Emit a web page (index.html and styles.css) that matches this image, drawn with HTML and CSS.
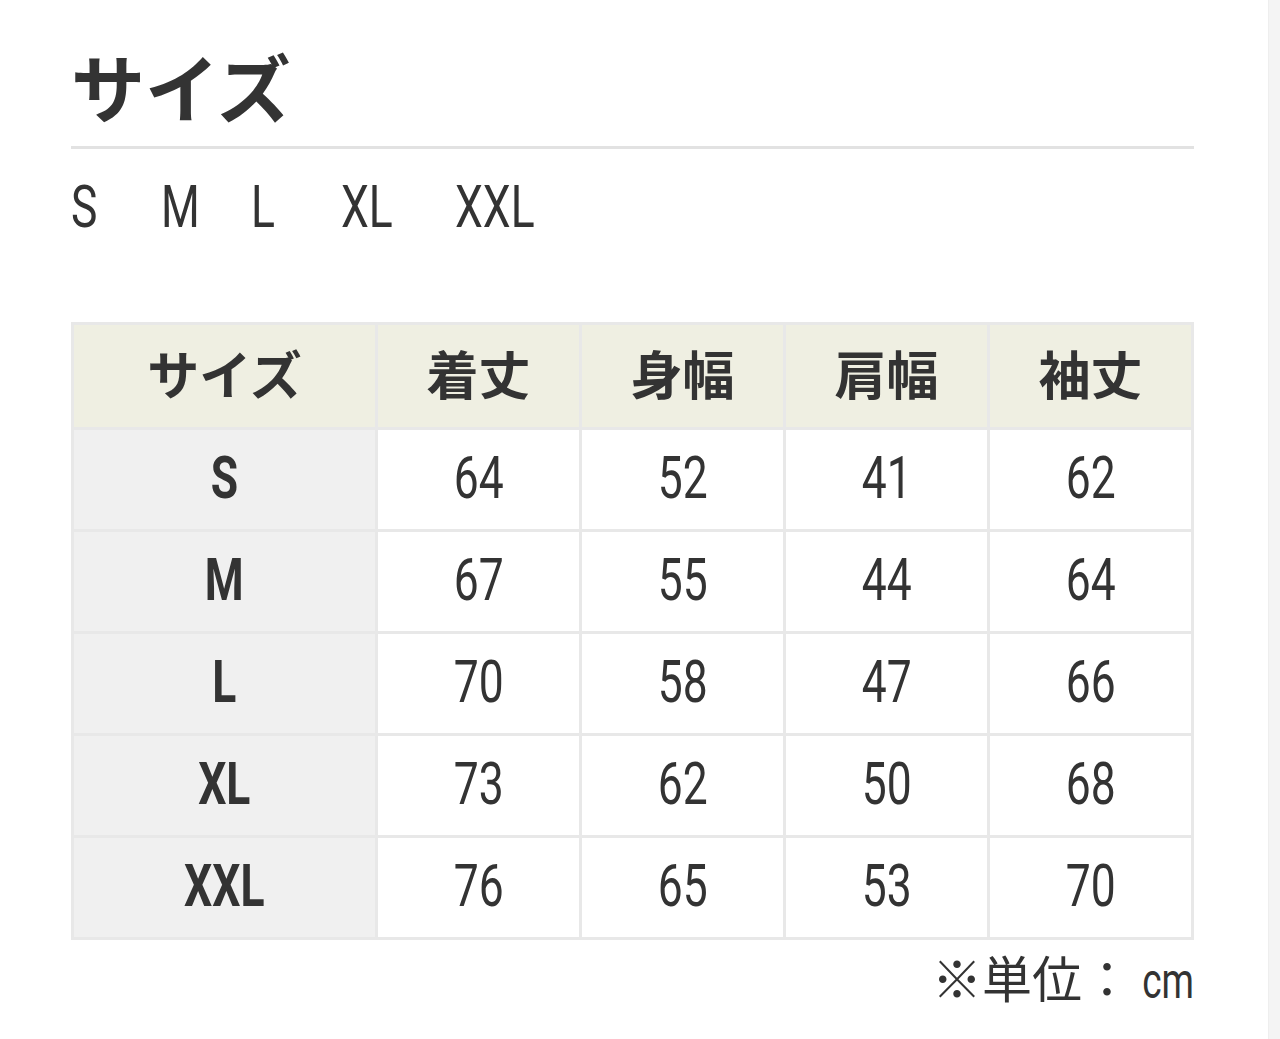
FILE: index.html
```html
<!DOCTYPE html>
<html lang="ja">
<head>
<meta charset="utf-8">
<title>サイズ</title>
<link rel="stylesheet" href="styles.css">
</head>
<body>
<div class="page">
  <main class="content">
    <h2 class="title">サイズ</h2>
    <ul class="size-list">
      <li class="len1"><span class="cond">S</span></li>
      <li class="len1"><span class="cond">M</span></li>
      <li class="len1"><span class="cond">L</span></li>
      <li class="len2"><span class="cond">XL</span></li>
      <li class="len3"><span class="cond">XXL</span></li>
    </ul>
    <table class="size-table">
      <colgroup>
        <col class="c-first">
        <col class="c-data">
        <col class="c-data">
        <col class="c-data">
        <col class="c-data">
      </colgroup>
      <thead>
        <tr>
          <th>サイズ</th>
          <th>着丈</th>
          <th>身幅</th>
          <th>肩幅</th>
          <th>袖丈</th>
        </tr>
      </thead>
      <tbody>
        <tr><th><span class="cond">S</span></th><td><span class="cond">64</span></td><td><span class="cond">52</span></td><td><span class="cond">41</span></td><td><span class="cond">62</span></td></tr>
        <tr><th><span class="cond">M</span></th><td><span class="cond">67</span></td><td><span class="cond">55</span></td><td><span class="cond">44</span></td><td><span class="cond">64</span></td></tr>
        <tr><th><span class="cond">L</span></th><td><span class="cond">70</span></td><td><span class="cond">58</span></td><td><span class="cond">47</span></td><td><span class="cond">66</span></td></tr>
        <tr><th><span class="cond">XL</span></th><td><span class="cond">73</span></td><td><span class="cond">62</span></td><td><span class="cond">50</span></td><td><span class="cond">68</span></td></tr>
        <tr><th><span class="cond">XXL</span></th><td><span class="cond">76</span></td><td><span class="cond">65</span></td><td><span class="cond">53</span></td><td><span class="cond">70</span></td></tr>
      </tbody>
    </table>
    <p class="unit">※単位：<span class="cond unit-cm">cm</span></p>
  </main>
  <div class="side-strip"></div>
</div>
</body>
</html>
```

FILE: styles.css
```css
html, body {
  margin: 0;
  padding: 0;
  background: #ffffff;
}

body {
  font-family: Roboto, "Noto Sans CJK JP", sans-serif;
  color: #333333;
}

.page {
  display: flex;
  width: 1280px;
  min-height: 1039px;
}

.content {
  flex: 1;
  padding: 48px 0 0 71px;
}

.side-strip {
  width: 11px;
  background: #f4f4f4;
  border-left: 1px solid #eeeeee;
}

/* condensed latin text */
.cond {
  display: inline-block;
  transform: scaleX(0.74);
  transform-origin: center;
}

.title {
  width: 1123px;
  margin: 0;
  padding-bottom: 24px;
  border-bottom: 3px solid #e2e2e2;
  font-family: "Noto Sans CJK JP", sans-serif;
  font-size: 74px;
  line-height: 1;
  font-weight: 700;
  color: #333333;
}

.size-list {
  display: flex;
  gap: 64px;
  list-style: none;
  margin: 28px 0 0 0;
  padding: 0;
  font-size: 60px;
  line-height: 1;
  white-space: nowrap;
}

.size-list li .cond {
  transform-origin: left center;
}

.len1 { width: 26px; }
.len2 { width: 50px; }
.len3 { width: 76px; }

.size-table {
  margin-top: 85px;
  width: 1123px;
  table-layout: fixed;
  border-collapse: separate;
  border-spacing: 3px;
  background: #e8e8e8;
}

.c-first { width: 301px; }
.c-data { width: 201px; }

.size-table th,
.size-table td {
  padding: 0 0 4px 0;
  text-align: center;
  vertical-align: middle;
  line-height: 1;
}

.size-table thead th {
  height: 96px;
  padding-bottom: 6px;
  background: #efefe2;
  font-family: "Noto Sans CJK JP", sans-serif;
  font-size: 52px;
  font-weight: 700;
}

.size-table tbody th {
  height: 95px;
  background: #f0f0f0;
  font-size: 60px;
  font-weight: 700;
}

.size-table tbody td {
  height: 95px;
  background: #ffffff;
  font-size: 60px;
  font-weight: 400;
}

.unit {
  width: 1123px;
  margin: 16px 0 0 0;
  text-align: right;
  font-size: 50px;
  line-height: 1;
}

.unit-cm {
  transform-origin: right center;
  margin-left: -8px;
}
```
